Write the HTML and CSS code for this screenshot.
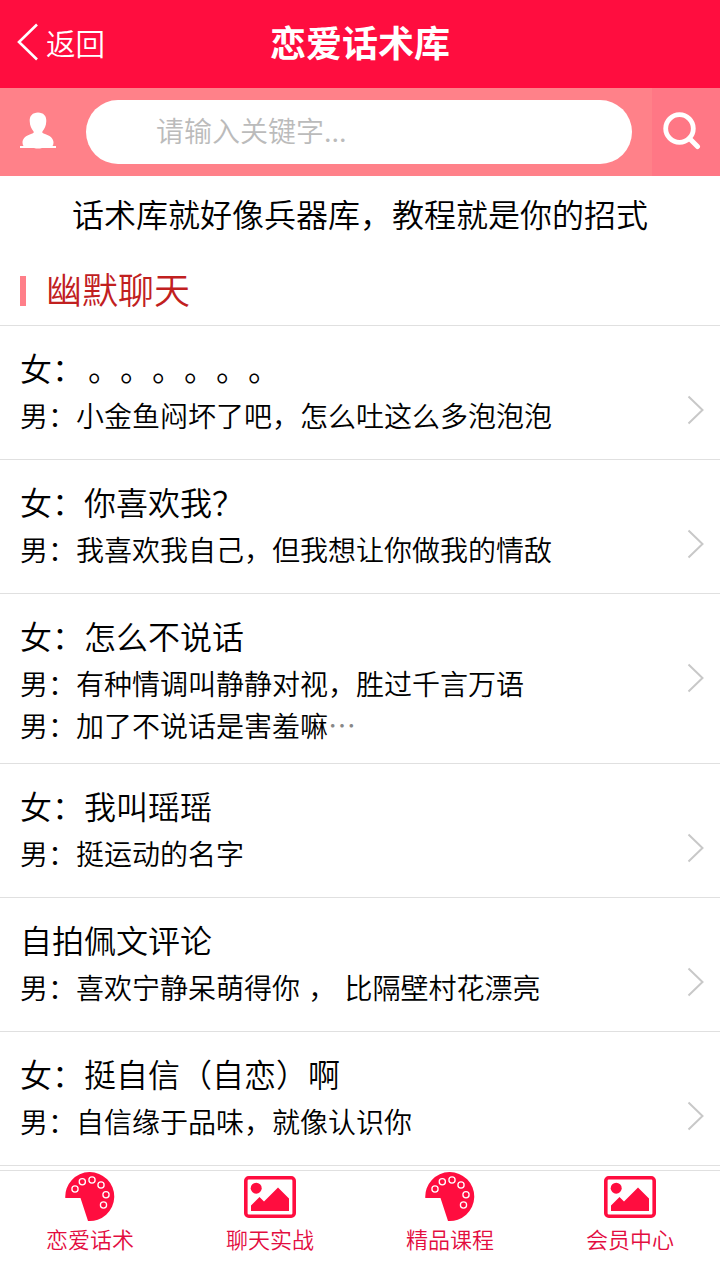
FILE: index.html
```html
<!DOCTYPE html>
<html lang="zh-CN">
<head>
    <meta charset="UTF-8">
    <meta name="viewport" content="width=device-width, initial-scale=1.0">
    <title>恋爱话术库</title>
    <link rel="stylesheet" href="styles.css">
</head>
<body>
    <svg class="sprite" xmlns="http://www.w3.org/2000/svg">
        <symbol id="icon-arrow" viewBox="0 0 18 30">
            <path d="M1.5 1.5 L15.5 15 L1.5 28.5" fill="none" stroke="#c8c8c8" stroke-width="2"/>
        </symbol>
        <symbol id="icon-palette" viewBox="0 0 50 50">
            <path d="M0.3 26 A24.5 24.5 0 1 1 23 49 L15.5 26 Z" fill="#ff0d3f"/>
            <g fill="none" stroke="#fff" stroke-width="1.3">
                <circle cx="10" cy="17" r="3.1"/>
                <circle cx="17.3" cy="9.8" r="3.1"/>
                <circle cx="27" cy="8" r="3.1"/>
                <circle cx="36" cy="13" r="3.1"/>
                <circle cx="41" cy="22.7" r="3.1"/>
                <circle cx="38.5" cy="33" r="3.1"/>
            </g>
        </symbol>
        <symbol id="icon-picture" viewBox="0 0 52 42">
            <rect x="1.8" y="1.8" width="48.4" height="38.4" rx="3" fill="none" stroke="#ff0d3f" stroke-width="3.6"/>
            <circle cx="12.2" cy="12.2" r="5.5" fill="#ff0d3f"/>
            <path d="M7 35 V29.5 L15.5 21 L20 25.5 L34 11.5 L45 22.5 V35 Z" fill="#ff0d3f"/>
        </symbol>
    </svg>

    <header class="header">
        <a class="back" href="#">
            <svg class="back-icon" viewBox="0 0 22 38">
                <path d="M20 1.5 L2 19 L20 36.5" fill="none" stroke="#fff" stroke-width="2.6"/>
            </svg>
            <span>返回</span>
        </a>
        <h1>恋爱话术库</h1>
    </header>

    <div class="search-bar">
        <a class="user" href="#">
            <svg viewBox="0 0 36 37">
                <path d="M18 0.5 C23.5 0.5 26.5 4 26.3 9 C26.2 14 24.3 17 22.4 19.5 C21.8 21 23 21.4 25 22 C30 23.6 33.5 26.5 33.5 30.5 Q33.5 32.5 32.5 34 H36 V36 H22 Q18 37 14 36 H0 V34 H3.5 Q2.5 32.5 2.5 30.5 C2.5 26.5 6 23.6 11 22 C13 21.4 14.2 21 13.6 19.5 C11.7 17 9.8 14 9.7 9 C9.5 4 12.5 0.5 18 0.5 Z" fill="#fff"/>
            </svg>
        </a>
        <input class="search-input" type="text" placeholder="请输入关键字...">
        <a class="search-button" href="#">
            <svg viewBox="0 0 38 38">
                <circle cx="16.5" cy="16.5" r="13.8" fill="none" stroke="#fff" stroke-width="4.8"/>
                <path d="M26.5 26.5 L34.5 34.5" stroke="#fff" stroke-width="5" stroke-linecap="round"/>
            </svg>
        </a>
    </div>

    <main>
        <p class="slogan">话术库就好像兵器库，教程就是你的招式</p>
        <h2 class="section-title"><span>幽默聊天</span></h2>

        <ul class="list">
            <li class="item">
                <h3>女：<span class="dots">。。。。。。</span></h3>
                <p>男：小金鱼闷坏了吧，怎么吐这么多泡泡泡</p>
                <svg class="arrow"><use href="#icon-arrow"/></svg>
            </li>
            <li class="item">
                <h3>女：你喜欢我？</h3>
                <p>男：我喜欢我自己，但我想让你做我的情敌</p>
                <svg class="arrow"><use href="#icon-arrow"/></svg>
            </li>
            <li class="item">
                <h3>女：怎么不说话</h3>
                <p>男：有种情调叫静静对视，胜过千言万语</p>
                <p>男：加了不说话是害羞嘛<span class="more">…</span></p>
                <svg class="arrow"><use href="#icon-arrow"/></svg>
            </li>
            <li class="item">
                <h3>女：我叫瑶瑶</h3>
                <p>男：挺运动的名字</p>
                <svg class="arrow"><use href="#icon-arrow"/></svg>
            </li>
            <li class="item">
                <h3>自拍佩文评论</h3>
                <p>男：喜欢宁静呆萌得你 ， 比隔壁村花漂亮</p>
                <svg class="arrow"><use href="#icon-arrow"/></svg>
            </li>
            <li class="item">
                <h3>女：挺自信（自恋）啊</h3>
                <p>男：自信缘于品味，就像认识你</p>
                <svg class="arrow"><use href="#icon-arrow"/></svg>
            </li>
        </ul>
    </main>

    <nav class="tabs">
        <a class="tab" href="#">
            <svg class="palette"><use href="#icon-palette"/></svg>
            <span>恋爱话术</span>
        </a>
        <a class="tab" href="#">
            <svg class="picture"><use href="#icon-picture"/></svg>
            <span>聊天实战</span>
        </a>
        <a class="tab" href="#">
            <svg class="palette"><use href="#icon-palette"/></svg>
            <span>精品课程</span>
        </a>
        <a class="tab" href="#">
            <svg class="picture"><use href="#icon-picture"/></svg>
            <span>会员中心</span>
        </a>
    </nav>
</body>
</html>
```
FILE: styles.css
```css
* {
    box-sizing: border-box;
    margin: 0;
    padding: 0;
}

body {
    display: flex;
    flex-direction: column;
    height: 100vh;
    overflow: hidden;
    background: #fff;
    color: #000;
    font-family: "Noto Sans CJK SC", sans-serif;
    font-weight: 350;
    text-spacing-trim: space-all;
}

a {
    color: inherit;
    text-decoration: none;
}

.sprite {
    display: none;
}

.header {
    display: grid;
    grid-template-columns: 1fr auto 1fr;
    align-items: start;
    flex: none;
    height: 88px;
    padding: 0 17px;
    background: #ff0d3f;
    color: #fff;
}

.header h1 {
    font-size: 36px;
    font-weight: 700;
    line-height: 82px;
}

.back {
    display: flex;
    align-items: center;
    gap: 7px;
    height: 84px;
    font-size: 29.5px;
}

.back-icon {
    width: 22px;
    height: 38px;
}

.search-bar {
    display: flex;
    align-items: center;
    flex: none;
    height: 88px;
    background: #ff8189;
}

.user {
    width: 36px;
    height: 37px;
    margin: 0 30px 3px 20px;
}

.user svg {
    display: block;
}

.search-input {
    width: 546px;
    height: 64px;
    padding: 0 70px 4px;
    border: none;
    border-radius: 32px;
    background: #fff;
    font: inherit;
    font-size: 28px;
    outline: none;
}

.search-input::placeholder {
    color: #bbb;
}

.search-button {
    display: flex;
    align-items: center;
    width: 68px;
    height: 88px;
    margin-left: auto;
    padding: 0 0 2px 11px;
    background: #ff7785;
}

.search-button svg {
    width: 38px;
    height: 38px;
}

main {
    flex: 1;
    min-height: 0;
    overflow: hidden;
}

.slogan {
    height: 80px;
    font-size: 32px;
    line-height: 74px;
    text-align: center;
}

.section-title {
    display: flex;
    align-items: center;
    height: 69px;
    padding-left: 20px;
    color: #c1201f;
    font-size: 36px;
    font-weight: 350;
    line-height: 60px;
}

.section-title span {
    padding-bottom: 5px;
}

.section-title::before {
    content: "";
    width: 6px;
    height: 30px;
    margin-right: 20px;
    background: #ff7f89;
}

.list {
    border-top: 1px solid #e0e0e0;
    list-style: none;
}

.item {
    position: relative;
    min-height: 134px;
    padding: 16px 50px 17px 20px;
    border-bottom: 1px solid #e0e0e0;
}

.item h3 {
    padding-bottom: 2px;
    font-size: 32px;
    font-weight: 350;
    line-height: 50px;
}

.item p {
    font-size: 28px;
    line-height: 42px;
    word-spacing: 2px;
}

.dots {
    margin-left: 4px;
}

.more {
    color: #888;
}

.arrow {
    position: absolute;
    top: 69px;
    right: 15px;
    width: 18px;
    height: 30px;
}

.tabs {
    display: flex;
    flex: none;
    height: 110px;
    border-top: 1px solid #e0e0e0;
    background: #fff;
}

.tab {
    display: flex;
    flex: 1;
    flex-direction: column;
    align-items: center;
    color: #e30d3f;
    font-size: 22px;
    line-height: 30px;
}

.palette {
    width: 50px;
    height: 50px;
    margin: 1px 0;
}

.picture {
    width: 52px;
    height: 42px;
    margin: 5px 0;
}
```
